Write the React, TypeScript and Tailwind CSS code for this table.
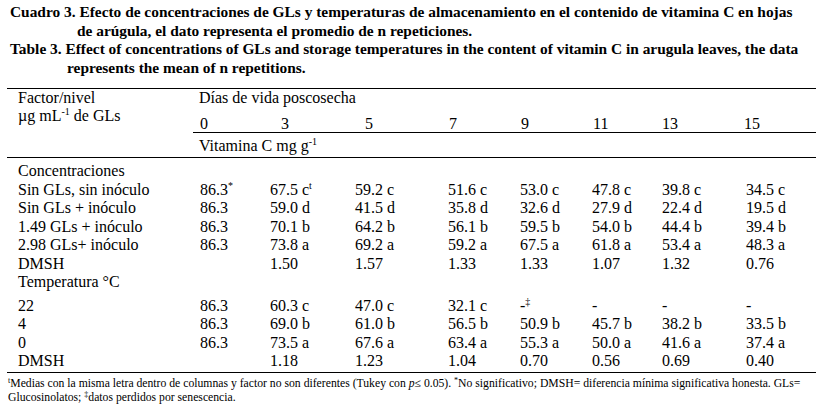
import React from "react";

const W = ["w-[182px]", "w-[70px]", "w-[85px]", "w-[93px]", "w-[72px]", "w-[72px]", "w-[70px]", "w-[84px]", "flex-1"];

type Cell = React.ReactNode;

function Row({ cells, className = "" }: { cells: Cell[]; className?: string }) {
  return (
    <div className={"flex h-[18.5px] leading-[18.5px] whitespace-nowrap " + className}>
      {cells.map((c, i) => (
        <div key={i} className={W[i] + " shrink-0"}>
          {c}
        </div>
      ))}
    </div>
  );
}

const sup = (s: string) => <sup className="text-[10px] relative -top-[6px]">{s}</sup>;
const fsup = (s: string) => <sup className="text-[8px] relative -top-[4px]">{s}</sup>;

export default function App() {
  const rowsA: Cell[][] = [
    ["Concentraciones", "", "", "", "", "", "", "", ""],
    [
      "Sin GLs, sin inóculo",
      <>86.3{sup("*")}</>,
      <>67.5 c{sup("t")}</>,
      "59.2 c",
      "51.6 c",
      "53.0 c",
      "47.8 c",
      "39.8 c",
      "34.5 c",
    ],
    ["Sin GLs + inóculo", "86.3", "59.0 d", "41.5 d", "35.8 d", "32.6 d", "27.9 d", "22.4 d", "19.5 d"],
    ["1.49 GLs + inóculo", "86.3", "70.1 b", "64.2 b", "56.1 b", "59.5 b", "54.0 b", "44.4 b", "39.4 b"],
    ["2.98 GLs+ inóculo", "86.3", "73.8 a", "69.2 a", "59.2 a", "67.5 a", "61.8 a", "53.4 a", "48.3 a"],
    ["DMSH", "", "1.50", "1.57", "1.33", "1.33", "1.07", "1.32", "0.76"],
    ["Temperatura °C", "", "", "", "", "", "", "", ""],
  ];
  const rowsB: Cell[][] = [
    ["22", "86.3", "60.3 c", "47.0 c", "32.1 c", <>-{sup("‡")}</>, "-", "-", "-"],
    ["4", "86.3", "69.0 b", "61.0 b", "56.5 b", "50.9 b", "45.7 b", "38.2 b", "33.5 b"],
    ["0", "86.3", "73.5 a", "67.6 a", "63.4 a", "55.3 a", "50.0 a", "41.6 a", "37.4 a"],
    ["DMSH", "", "1.18", "1.23", "1.04", "0.70", "0.56", "0.69", "0.40"],
  ];

  return (
    <div className="w-[821px] h-[408px] bg-white text-black overflow-hidden font-['Liberation_Serif','Times_New_Roman',serif]">
      {/* Title */}
      <div className="pt-[3px] pl-[10px] font-bold text-[15.4px] leading-[18.5px] whitespace-nowrap">
        <div>Cuadro 3. Efecto de concentraciones de GLs y temperaturas de almacenamiento en el contenido de vitamina C en hojas</div>
        <div className="pl-[67px]">de arúgula, el dato representa el promedio de n repeticiones.</div>
        <div>Table 3. Effect of concentrations of GLs and storage temperatures in the content of vitamin C in arugula leaves, the data</div>
        <div className="pl-[57px]">represents the mean of n repetitions.</div>
      </div>

      {/* Table */}
      <div className="ml-[7px] w-[809px] mt-[11px] text-[16px]">
        <div className="flex border-t border-b border-black h-[70px]">
          <div className="w-[186px] shrink-0 pl-[11px] leading-[18px] whitespace-nowrap">
            <div>Factor/nivel</div>
            <div>
              µg mL{sup("-1")} de GLs
            </div>
          </div>
          <div className="flex-1">
            <div className="pl-[6px] leading-[18px] h-[18px] whitespace-nowrap">Días de vida poscosecha</div>
            <div className="mt-[7px] flex h-[19px] leading-[20px] border-b border-black whitespace-nowrap">
              <div className="w-[77px] shrink-0 pl-[7px]">0</div>
              <div className="w-[85px] shrink-0 pl-[11px]">3</div>
              <div className="w-[93px] shrink-0 pl-[10px]">5</div>
              <div className="w-[72px] shrink-0 pl-[1px]">7</div>
              <div className="w-[72px] shrink-0 pl-[1px]">9</div>
              <div className="w-[70px] shrink-0 pl-[1px]">11</div>
              <div className="w-[82px] shrink-0">13</div>
              <div className="flex-1">15</div>
            </div>
            <div className="pl-[6px] h-[24px] leading-[25px] whitespace-nowrap">
              Vitamina C mg g{sup("-1")}
            </div>
          </div>
        </div>

        <div className="pl-[11px] pt-[4px] border-b border-black pb-[1px]">
          {rowsA.map((r, i) => (
            <Row key={i} cells={r} />
          ))}
          <div className="h-[5px]" />
          {rowsB.map((r, i) => (
            <Row key={i} cells={r} />
          ))}
        </div>
      </div>

      {/* Footnote */}
      <div className="pl-[8px] pt-[4px] text-[11.7px] leading-[14px] whitespace-nowrap">
        <div>
          {fsup("t")}Medias con la misma letra dentro de columnas y factor no son diferentes (Tukey con <i>p</i>≤ 0.05). {fsup("*")}No
          significativo; DMSH= diferencia mínima significativa honesta. GLs=
        </div>
        <div>Glucosinolatos; {fsup("‡")}datos perdidos por senescencia.</div>
      </div>
    </div>
  );
}
